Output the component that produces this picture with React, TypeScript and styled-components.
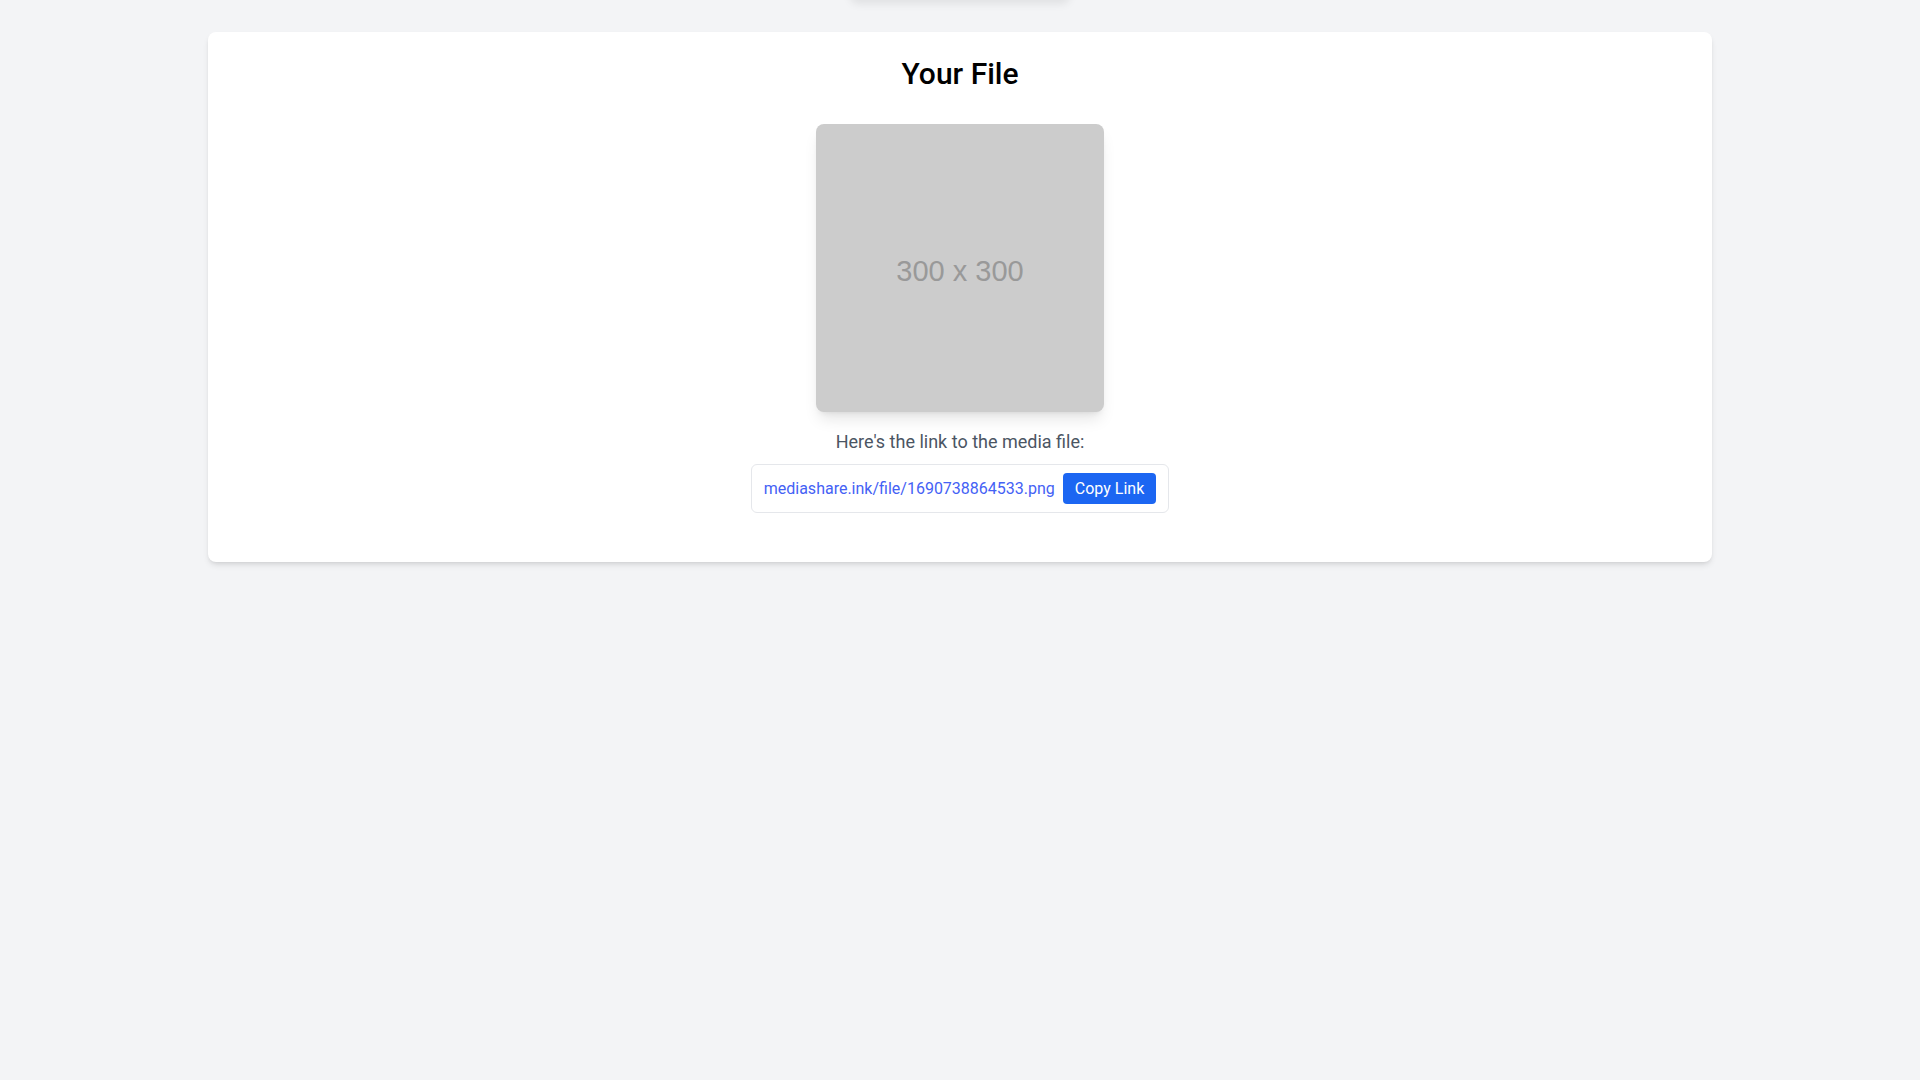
import styled, { createGlobalStyle } from 'styled-components';

const GlobalStyle = createGlobalStyle`
  * {
    box-sizing: border-box;
  }
  html,
  body {
    margin: 0;
    padding: 0;
    background: #f3f4f6;
    font-family: Roboto, 'Liberation Sans', Arial, sans-serif;
    overflow: hidden;
  }
`;

const fileUrl = 'mediashare.ink/file/1690738864533.png';

function App() {
  return (
    <>
      <GlobalStyle />
      <Page>
        <HiddenToast />
        <Container>
          <Card>
            <Title>Your File</Title>
            <Preview>
              <PreviewLabel>300 x 300</PreviewLabel>
            </Preview>
            <Caption>Here's the link to the media file:</Caption>
            <LinkBox>
              <FileLink href="#">{fileUrl}</FileLink>
              <CopyButton type="button">Copy Link</CopyButton>
            </LinkBox>
          </Card>
        </Container>
      </Page>
    </>
  );
}

export default App;

const Page = styled.div`
  min-height: 100vh;
  background: #f3f4f6;
`;

const HiddenToast = styled.div`
  width: 220px;
  height: 40px;
  margin: -40px auto 0;
  background: #f3f4f6;
  border-radius: 8px;
  box-shadow: 0 4px 8px rgba(0, 0, 0, 0.08);
`;

const Container = styled.div`
  max-width: 1536px;
  margin: 0 auto;
  padding: 32px 16px 0;
`;

const Card = styled.div`
  background: #ffffff;
  border-radius: 8px;
  box-shadow: 0 4px 6px -1px rgba(0, 0, 0, 0.1), 0 2px 4px -2px rgba(0, 0, 0, 0.1);
  padding: 24px 24px 25px;
  display: flex;
  flex-direction: column;
  align-items: center;
`;

const Title = styled.h1`
  margin: 0 0 32px;
  font-size: 30px;
  line-height: 36px;
  font-weight: 500;
  color: #000000;
`;

const Preview = styled.div`
  width: 288px;
  height: 288px;
  background: #cccccc;
  border-radius: 8px;
  box-shadow: 0 10px 15px -3px rgba(0, 0, 0, 0.1), 0 4px 6px -4px rgba(0, 0, 0, 0.1);
  display: flex;
  align-items: center;
  justify-content: center;
  padding-top: 6px;
`;

const PreviewLabel = styled.span`
  font-family: 'Liberation Sans', Arial, sans-serif;
  font-size: 29px;
  color: #999999;
`;

const Caption = styled.p`
  margin: 16px 0 8px;
  font-size: 18px;
  line-height: 28px;
  color: #4b5563;
`;

const LinkBox = styled.div`
  display: flex;
  align-items: center;
  gap: 8px;
  padding: 8px 12px;
  border: 1px solid #e5e7eb;
  border-radius: 6px;
  margin-bottom: 24px;
`;

const FileLink = styled.a`
  font-size: 16px;
  line-height: 24px;
  color: #4461f5;
  text-decoration: none;
`;

const CopyButton = styled.button`
  font-family: Roboto, 'Liberation Sans', Arial, sans-serif;
  font-size: 16px;
  line-height: 23px;
  font-weight: 400;
  color: #ffffff;
  background: #1c66f2;
  border: none;
  border-radius: 4px;
  padding: 4px 12px;
  cursor: pointer;
`;
